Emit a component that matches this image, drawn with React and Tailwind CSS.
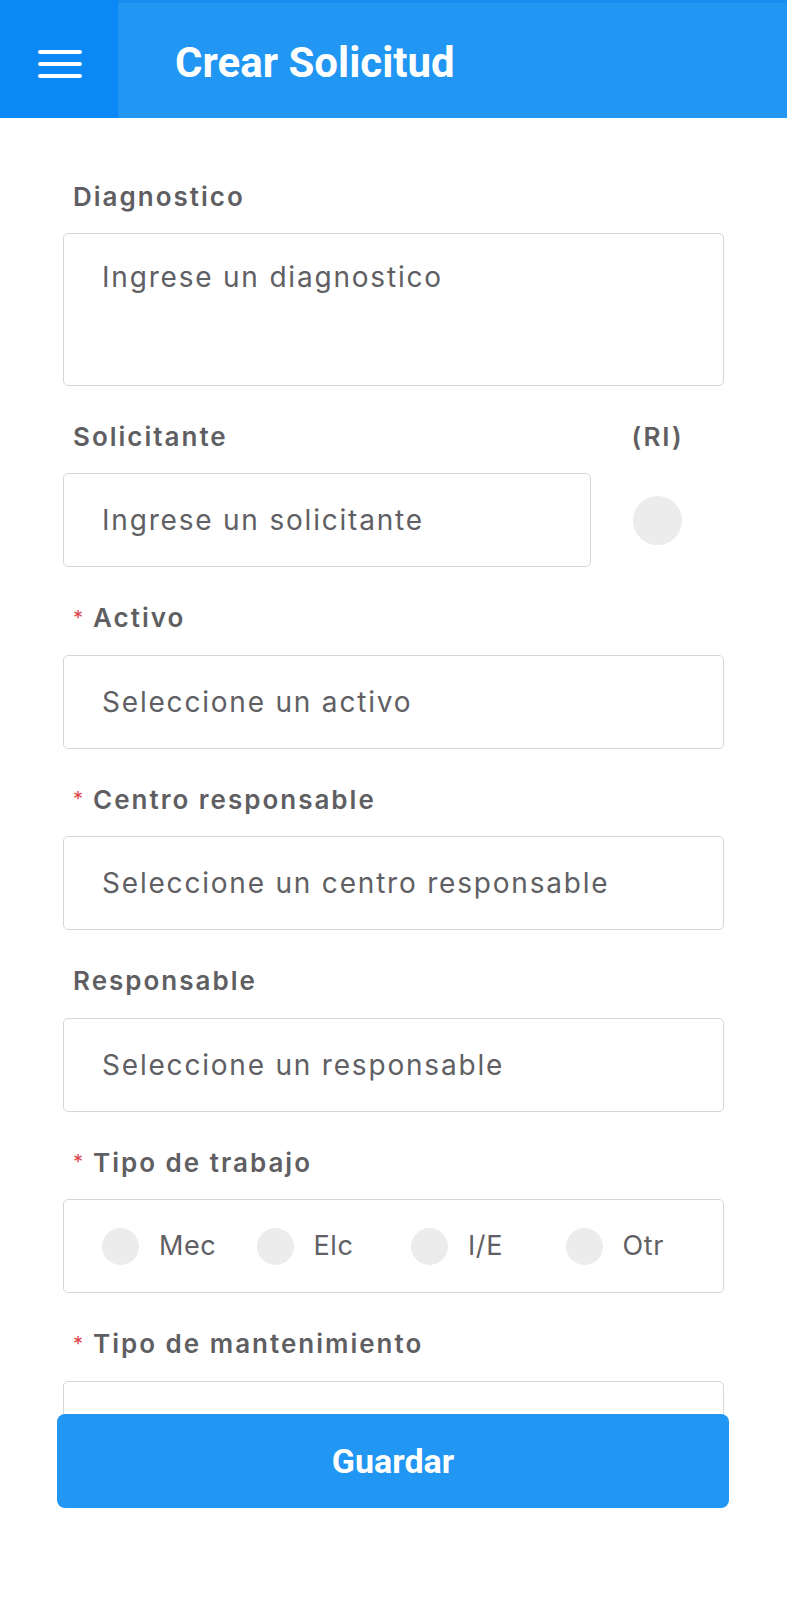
const FONT = { fontFamily: 'Inter, "Noto Sans", sans-serif' };

function Label({ children, required = false }) {
  return (
    <p className="flex items-center h-[30px] text-[26px] font-semibold text-[#5f5f63] tracking-[2px]" style={FONT}>
      {required && <span className="mr-[8px] text-[#e0454b] text-[20px] font-normal">*</span>}
      {children}
    </p>
  );
}

function Placeholder({ children }) {
  return (
    <span className="text-[28px] leading-[34px] tracking-[1.8px] text-[#606064]" style={FONT}>
      {children}
    </span>
  );
}

function Field({ label, required, placeholder }) {
  return (
    <div className="mt-[35.5px]">
      <Label required={required}>{label}</Label>
      <div className="mt-[22px] flex h-[94px] items-center rounded-[5px] border border-[#d6d6d6] bg-white pl-[38px]">
        <Placeholder>{placeholder}</Placeholder>
      </div>
    </div>
  );
}

function Radio({ label }) {
  return (
    <div className="flex items-center gap-[20px]">
      <span className="h-[37px] w-[37px] rounded-full bg-[#ececec]" />
      <span className="text-[27px] tracking-[0.6px] text-[#606064]" style={FONT}>{label}</span>
    </div>
  );
}

export default function App() {
  return (
    <div className="relative h-[1600px] w-[787px] overflow-hidden bg-white">
      <header className="flex h-[118px] bg-[#2196f3] border-t-[3px] border-[#1a8ef0]">
        <div className="flex w-[118px] items-center justify-center bg-[#0a88f5] -mt-[3px]">
          <div className="mt-[9px] flex flex-col gap-[8px] pl-[2px]">
            <span className="block h-[4px] w-[44px] rounded-sm bg-white" />
            <span className="block h-[4px] w-[44px] rounded-sm bg-white" />
            <span className="block h-[4px] w-[44px] rounded-sm bg-white" />
          </div>
        </div>
        <h1
          className="ml-[57px] mt-[4px] flex items-center text-[42px] font-bold text-white"
          style={{ fontFamily: 'Roboto, "Liberation Sans", sans-serif' }}
        >
          Crear Solicitud
        </h1>
      </header>

      <main className="px-[63px] pt-[63px]">
        <div>
          <div className="pl-[10px]">
            <Label>Diagnostico</Label>
          </div>
          <div className="mt-[22px] h-[153px] rounded-[5px] border border-[#d6d6d6] bg-white pl-[38px] pt-[26px]">
            <Placeholder>Ingrese un diagnostico</Placeholder>
          </div>
        </div>

        <div className="mt-[35px] flex">
          <div className="flex-1">
            <div className="pl-[10px]">
              <Label>Solicitante</Label>
            </div>
            <div className="mt-[22px] flex h-[94px] items-center rounded-[5px] border border-[#d6d6d6] bg-white pl-[38px]">
              <Placeholder>Ingrese un solicitante</Placeholder>
            </div>
          </div>
          <div className="flex w-[133px] flex-col items-center">
            <Label>(RI)</Label>
            <div className="mt-[22px] flex h-[94px] items-center">
              <span className="h-[49px] w-[49px] rounded-full bg-[#ececec]" />
            </div>
          </div>
        </div>

        <div className="[&_p]:pl-[10px]">
          <Field label="Activo" required placeholder="Seleccione un activo" />
          <Field label="Centro responsable" required placeholder="Seleccione un centro responsable" />
          <Field label="Responsable" placeholder="Seleccione un responsable" />

          <div className="mt-[35.5px]">
            <Label required>Tipo de trabajo</Label>
            <div className="mt-[22px] grid h-[94px] grid-cols-4 items-center rounded-[5px] border border-[#d6d6d6] bg-white pl-[38px] pr-[3px]">
              <Radio label="Mec" />
              <Radio label="Elc" />
              <Radio label="I/E" />
              <Radio label="Otr" />
            </div>
          </div>

          <Field label="Tipo de mantenimiento" required placeholder="Seleccione un tipo de mantenimiento" />
        </div>
      </main>

      <footer className="absolute inset-x-0 bottom-0 bg-white pl-[57px] pb-[92px] pr-[58px]">
        <button
          className="flex h-[94px] w-full items-center justify-center rounded-[8px] bg-[#2196f3] text-[34px] font-bold text-white"
          style={{ fontFamily: 'Roboto, "Liberation Sans", sans-serif' }}
        >
          Guardar
        </button>
      </footer>
    </div>
  );
}
